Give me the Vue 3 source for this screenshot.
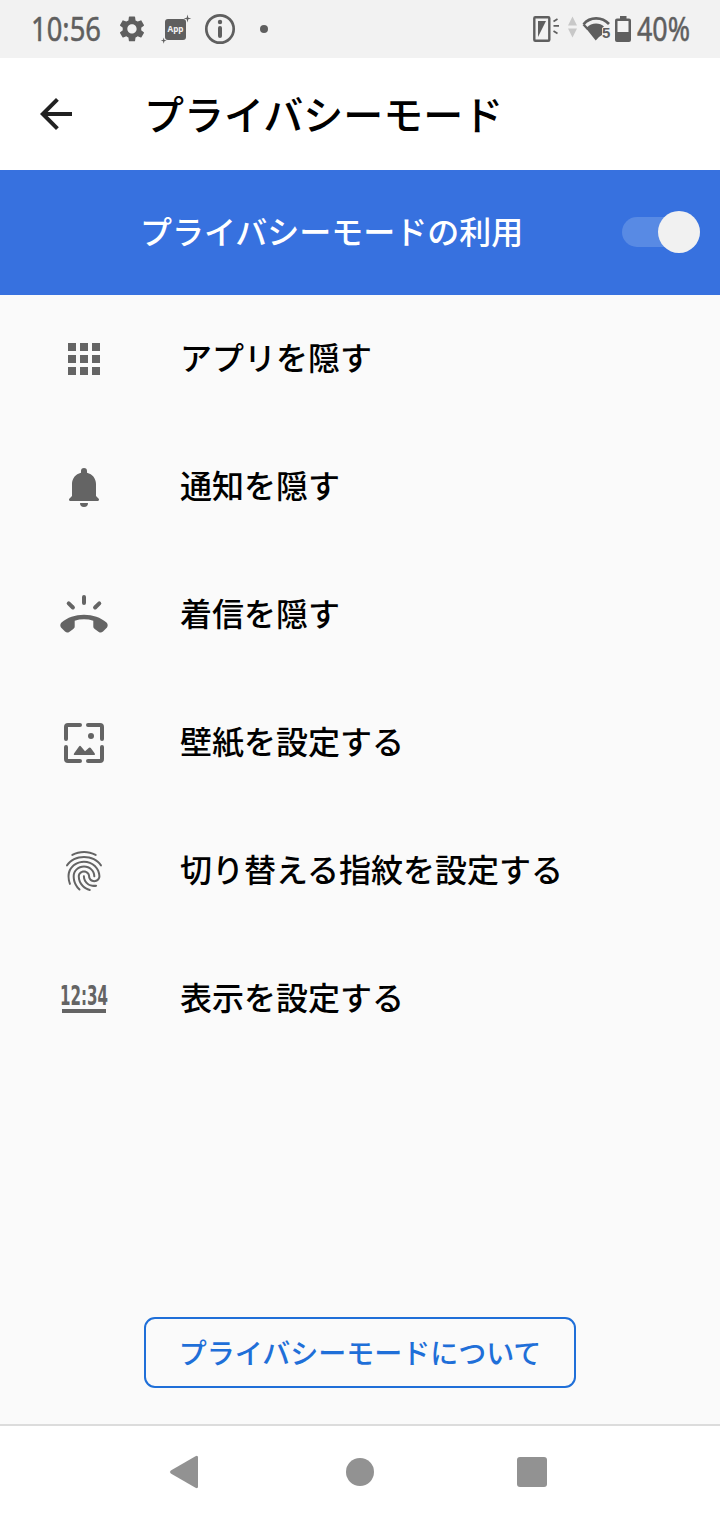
<template>
  <div class="screen">
    <header class="status-bar">
      <svg width="720" height="58" viewBox="0 0 720 58" fill="#5f5f5f">
        <text class="status-text" x="31" y="40.500" textLength="70" lengthAdjust="spacingAndGlyphs">10:56</text>

        <!-- settings -->
        <g transform="translate(116.5 13.5) scale(1.29)">
          <path d="M19.14 12.94c.04-.3.06-.61.06-.94 0-.32-.02-.64-.07-.94l2.03-1.58c.18-.14.23-.41.12-.61l-1.92-3.32c-.12-.22-.37-.29-.59-.22l-2.39.96c-.5-.38-1.03-.7-1.62-.94l-.36-2.54c-.04-.24-.24-.41-.48-.41h-3.84c-.24 0-.43.17-.47.41l-.36 2.54c-.59.24-1.13.57-1.62.94l-2.39-.96c-.22-.08-.47 0-.59.22L2.74 8.87c-.12.21-.08.47.12.61l2.03 1.58c-.05.3-.09.63-.09.94s.02.64.07.94l-2.03 1.58c-.18.14-.23.41-.12.61l1.92 3.32c.12.22.37.29.59.22l2.39-.96c.5.38 1.03.7 1.62.94l.36 2.54c.05.24.24.41.48.41h3.84c.24 0 .44-.17.47-.41l.36-2.54c.59-.24 1.13-.56 1.62-.94l2.39.96c.22.08.47 0 .59-.22l1.92-3.32c.12-.22.07-.47-.12-.61l-2.01-1.58zM12 15.6c-1.98 0-3.6-1.62-3.6-3.6s1.62-3.6 3.6-3.6 3.6 1.62 3.6 3.6-1.62 3.6-3.6 3.6z" />
        </g>

        <!-- app badge -->
        <rect x="165" y="19" width="21" height="21" rx="3" />
        <path d="M187.5 14.5l.8 3.200 3 .8-3 .8-.8 3.200-.8-3.200-3-.8 3-.8zM163.700 37.500l.7 2.400 2.300.7-2.300.7-.7 2.400-.7-2.400-2.300-.7 2.300-.7z" />
        <text class="app-text" x="167.500" y="32" textLength="16" lengthAdjust="spacingAndGlyphs">App</text>

        <!-- info -->
        <circle cx="220" cy="29" r="13.700" fill="none" stroke="#5f5f5f" stroke-width="2.700" />
        <circle cx="220" cy="22" r="2.200" />
        <rect x="218" y="26" width="4" height="12" rx="2" />

        <circle cx="264" cy="29" r="4" />

        <!-- call light -->
        <rect x="534.300" y="17.300" width="15" height="23.400" rx="1" fill="none" stroke="#5f5f5f" stroke-width="2.400" />
        <path d="M538 21h8l-8 16z" />
        <path d="M553.500 21.500l4-2.500M553.500 25.800h5.500M553.500 31l4 2.500" fill="none" stroke="#5f5f5f" stroke-width="1.700" />

        <path d="M572.500 16.500l4.500 9h-9zM572.500 37.500l-4.500-9h9z" fill="#c8c8c8" />

        <!-- wifi -->
        <path d="M583.500 24.300C590 16.500 602 16.500 609 24" fill="none" stroke="#5f5f5f" stroke-width="2.600" />
        <path d="M582.500 25l2-1 4 4-1.500 2zM587 27.500C591 22.500 600 22.500 604 26.500L602 28v7l-3 2-3.300 3.500-11.200-14z" />
        <text class="wifi-text" x="602" y="38">5</text>

        <!-- battery -->
        <path d="M620 16h6.500v2.500h2.500a2 2 0 0 1 2 2V40a2 2 0 0 1-2 2h-12a2 2 0 0 1-2-2V20.500a2 2 0 0 1 2-2h3zM617.500 21v11h11V21z" fill-rule="evenodd" />

        <text class="status-text" x="637" y="40.500" textLength="53" lengthAdjust="spacingAndGlyphs">40%</text>
      </svg>
    </header>

    <div class="toolbar">
      <svg class="back" width="48" height="48" viewBox="0 0 24 24" fill="#212121">
        <path d="M20 11H7.830l5.590-5.590L12 4l-8 8 8 8 1.410-1.410L7.830 13H20v-2z" />
      </svg>
      <h1>プライバシーモード</h1>
    </div>

    <div class="banner">
      <span>プライバシーモードの利用</span>
      <button class="switch" :class="{ on: enabled }" @click="enabled = !enabled">
        <i class="knob"></i>
      </button>
    </div>

    <ul class="menu">
      <li v-for="item in items" :key="item.icon">
        <svg width="48" height="48" viewBox="0 0 48 48" fill="#646464">
          <path v-if="item.icon === 'apps'" d="M8 8h8v8H8zM20 8h8v8h-8zM32 8h8v8h-8zM8 20h8v8H8zM20 20h8v8h-8zM32 20h8v8h-8zM8 32h8v8H8zM20 32h8v8h-8zM32 32h8v8h-8z" />
          <path v-else-if="item.icon === 'bell'" d="M21 9.700V8a3 3 0 0 1 6 0v1.700C32.500 11 36 15.500 36 21v12l2.500 2.500C39.500 36.500 39 38 37.500 38h-27C9 38 8.500 36.500 9.500 35.500L12 33V21C12 15.500 15.500 11 21 9.700zM20 40h8a4 4 0 0 1-8 0z" />
          <g v-else-if="item.icon === 'ring'">
            <path d="M24 6v6M8.700 12.300l4.200 4.200M39.300 12.300l-4.200 4.200" fill="none" stroke="#646464" stroke-width="4" stroke-linecap="round" />
            <path d="M24 23.700c-9 0-16.500 2.800-22.500 7.700-1.500 1.500-1.500 3.500-.5 5l4 4c1.300 1.300 2.700 1.500 4.200.6l3.800-2.800c1.200-.9 1.700-1.700 1.700-3v-5.500c6-1.900 12.600-1.900 18.600 0v5.500c0 1.300.5 2.100 1.700 3l3.800 2.800c1.500.9 2.900.7 4.200-.6l4-4c1-1.500 1-3.500-.5-5C40.500 26.500 33 23.700 24 23.700z" />
          </g>
          <g v-else-if="item.icon === 'wallpaper'">
            <path d="M6 20V8a2 2 0 0 1 2-2h12M28 6h12a2 2 0 0 1 2 2v12M42 28v12a2 2 0 0 1-2 2H28M20 42H8a2 2 0 0 1-2-2V28" fill="none" stroke="#646464" stroke-width="4" stroke-linecap="round" />
            <circle cx="31" cy="17" r="3" />
            <path d="M14 34.500l5-7.100q1-1.400 2 0l4 4.800 4-3.400q1-.8 1.800.2l4 5.500q.8 1.500-.8 1.500H14.500q-1.300 0-.5-1.500z" />
          </g>
          <path v-else-if="item.icon === 'finger'" transform="scale(2)" d="M17.810 4.470c-.08 0-.16-.02-.23-.06C15.660 3.420 14 3 12.010 3c-1.980 0-3.860.47-5.570 1.410-.24.13-.54.04-.68-.2-.13-.24-.04-.55.2-.68C7.820 2.520 9.860 2 12.010 2c2.130 0 3.990.47 6.030 1.520.25.13.34.43.21.67-.09.18-.26.28-.44.28zM3.500 9.720c-.1 0-.2-.03-.29-.09-.23-.16-.28-.47-.12-.7.99-1.400 2.250-2.500 3.750-3.270C9.980 4.040 14 4.030 17.150 5.650c1.500.77 2.760 1.860 3.750 3.250.16.22.11.54-.12.7-.23.16-.54.11-.7-.12-.9-1.260-2.040-2.250-3.390-2.940-2.870-1.470-6.540-1.470-9.400.01-1.360.7-2.500 1.700-3.400 2.960-.08.14-.23.21-.39.21zm6.250 12.070c-.13 0-.26-.05-.35-.15-.87-.87-1.340-1.430-2.010-2.640-.69-1.230-1.050-2.730-1.050-4.340 0-2.970 2.540-5.390 5.660-5.390s5.660 2.420 5.660 5.390c0 .28-.22.5-.5.5s-.5-.22-.5-.5c0-2.420-2.090-4.390-4.660-4.390-2.570 0-4.660 1.970-4.660 4.390 0 1.440.32 2.770.93 3.850.64 1.150 1.080 1.640 1.850 2.420.19.2.19.51 0 .71-.11.1-.24.15-.37.15zm7.170-1.850c-1.190 0-2.240-.3-3.100-.89-1.490-1.010-2.380-2.650-2.380-4.390 0-.28.22-.5.5-.5s.5.22.5.5c0 1.410.72 2.740 1.940 3.560.71.48 1.540.71 2.540.71.24 0 .64-.03 1.040-.1.27-.05.53.13.58.41.05.27-.13.53-.41.58-.57.11-1.070.12-1.210.12zM14.910 22c-.04 0-.09-.01-.13-.02-1.590-.44-2.630-1.030-3.720-2.100-1.400-1.390-2.170-3.240-2.170-5.220 0-1.620 1.380-2.940 3.080-2.940 1.700 0 3.080 1.320 3.080 2.940 0 1.070.93 1.940 2.080 1.940s2.080-.87 2.080-1.940c0-3.770-3.250-6.830-7.250-6.830-2.840 0-5.440 1.580-6.610 4.030-.39.81-.59 1.760-.59 2.800 0 .78.07 2.010.67 3.610.1.26-.03.55-.29.64-.26.1-.55-.04-.64-.29-.49-1.310-.73-2.610-.73-3.960 0-1.200.23-2.290.68-3.240 1.330-2.790 4.280-4.600 7.510-4.600 4.550 0 8.250 3.510 8.250 7.830 0 1.620-1.380 2.940-3.080 2.940s-3.080-1.320-3.080-2.940c0-1.070-.93-1.940-2.080-1.940s-2.080.87-2.080 1.940c0 1.710.66 3.310 1.870 4.510.95.94 1.860 1.460 3.270 1.850.27.07.42.35.35.61-.05.23-.26.38-.47.38z" />
          <g v-else>
            <text class="clock-text" x="0" y="30" textLength="48" lengthAdjust="spacingAndGlyphs">12:34</text>
            <rect x="2" y="34" width="44" height="4" />
          </g>
        </svg>
        <span>{{ item.label }}</span>
      </li>
    </ul>

    <div class="footer">
      <button class="about">プライバシーモードについて</button>
    </div>

    <nav class="nav-bar">
      <svg width="48" height="48" viewBox="4 0 48 48" fill="#929292">
        <path d="M10.800 22.600L35.500 8.300q2.500-1.300 2.500 1.200v29q0 2.500-2.500 1.200L10.800 25.400q-1.800-1.400 0-2.800z" />
      </svg>
      <svg width="48" height="48" viewBox="0 0 48 48" fill="#929292">
        <circle cx="24" cy="24" r="14" />
      </svg>
      <svg width="48" height="48" viewBox="0 0 48 48" fill="#929292">
        <rect x="9" y="9" width="30" height="30" rx="3" />
      </svg>
    </nav>
  </div>
</template>

<script setup>
import { ref } from 'vue';

const enabled = ref(true);

const items = [
  { icon: 'apps', label: 'アプリを隠す' },
  { icon: 'bell', label: '通知を隠す' },
  { icon: 'ring', label: '着信を隠す' },
  { icon: 'wallpaper', label: '壁紙を設定する' },
  { icon: 'finger', label: '切り替える指紋を設定する' },
  { icon: 'clock', label: '表示を設定する' },
];
</script>

<style>
body {
  margin: 0;
}
</style>

<style scoped>
.screen {
  display: flex;
  flex-direction: column;
  width: 720px;
  height: 1520px;
  background: #fafafa;
  color: #000;
  font-family: "Noto Sans CJK JP", sans-serif;
  font-weight: 500;
  overflow: hidden;
}

svg {
  display: block;
  flex: none;
  overflow: visible;
}

button {
  font: inherit;
  padding: 0;
  border: none;
  cursor: pointer;
}

.status-bar {
  height: 58px;
  background: #f2f2f2;
}

.status-text {
  font: 400 32px "Noto Sans", sans-serif;
  stroke: #5f5f5f;
  stroke-width: 0.5px;
}

.app-text {
  font: 700 9px "Noto Sans", sans-serif;
  fill: #f2f2f2;
}

.wifi-text {
  font: 700 15px "Liberation Sans", sans-serif;
}

.clock-text {
  font: 700 27px "DejaVu Sans", sans-serif;
}

.toolbar {
  display: flex;
  align-items: center;
  height: 112px;
  padding-left: 32px;
  background: #fff;
}

h1 {
  margin: 0 0 0 64px;
  padding-bottom: 3px;
  font-size: 40px;
  font-weight: 500;
  line-height: 60px;
}

.banner {
  display: flex;
  align-items: center;
  justify-content: space-between;
  box-sizing: border-box;
  height: 125px;
  padding: 0 20px 1px 140px;
  background: #3771df;
  color: #fff;
  font-size: 32px;
  line-height: 48px;
}

.banner span {
  padding-bottom: 4px;
}

.switch {
  display: flex;
  align-items: center;
  width: 78px;
  height: 30px;
  border-radius: 15px;
  background: #588ae4;
}

.switch.on {
  justify-content: flex-end;
}

.knob {
  flex: none;
  width: 42px;
  height: 42px;
  border-radius: 50%;
  background: #f1f1f1;
}

.menu {
  flex: 1;
  margin: 0;
  padding: 0;
  list-style: none;
}

.menu li {
  display: flex;
  align-items: center;
  gap: 72px;
  height: 128px;
  padding-left: 60px;
  font-size: 32px;
  line-height: 48px;
}

.menu span {
  padding-bottom: 6px;
}

.footer {
  display: flex;
  justify-content: center;
  padding-bottom: 36px;
}

.about {
  box-sizing: border-box;
  width: 432px;
  height: 71px;
  padding-bottom: 2px;
  border: 2px solid #1f6fd8;
  border-radius: 11px;
  background: transparent;
  color: #1f6fd8;
  font-size: 28px;
}

.nav-bar {
  display: flex;
  align-items: center;
  justify-content: center;
  gap: 124px;
  box-sizing: border-box;
  height: 96px;
  padding-bottom: 2px;
  border-top: 2px solid #dcdcdc;
  background: #fff;
}
</style>
